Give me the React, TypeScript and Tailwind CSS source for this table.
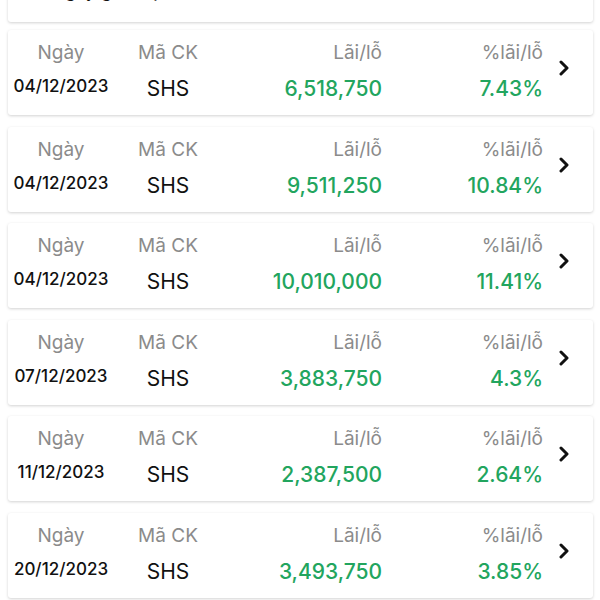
import React from "react";

type Row = { date: string; code: string; pl: string; pct: string };

const rows: Row[] = [
  { date: "04/12/2023", code: "SHS", pl: "6,518,750", pct: "7.43%" },
  { date: "04/12/2023", code: "SHS", pl: "9,511,250", pct: "10.84%" },
  { date: "04/12/2023", code: "SHS", pl: "10,010,000", pct: "11.41%" },
  { date: "07/12/2023", code: "SHS", pl: "3,883,750", pct: "4.3%" },
  { date: "11/12/2023", code: "SHS", pl: "2,387,500", pct: "2.64%" },
  { date: "20/12/2023", code: "SHS", pl: "3,493,750", pct: "3.85%" },
];

function Chevron() {
  return (
    <svg width="12" height="16" viewBox="0 0 12 16" fill="none">
      <polyline points="3,2 9,8 3,14" stroke="#111" strokeWidth="3" strokeLinecap="round" strokeLinejoin="round" />
    </svg>
  );
}

function Card({ r }: { r: Row }) {
  return (
    <div className="flex h-[85px] ml-[8px] mr-[7px] bg-white rounded-[3px] shadow-[0_1px_3px_rgba(0,0,0,0.18)]">
      <div className="w-[106px] flex flex-col items-center pt-[11px]">
        <div className="leading-[24px] text-[19px] text-[#8b8b8b]">Ngày</div>
        <div className="mt-[8px] leading-[26px] text-[17px] text-[#111] font-medium">{r.date}</div>
      </div>
      <div className="w-[108px] flex flex-col items-center pt-[11px]">
        <div className="leading-[24px] text-[19px] text-[#8b8b8b]">Mã CK</div>
        <div className="mt-[11px] leading-[26px] text-[21px] text-[#111]">{r.code}</div>
      </div>
      <div className="w-[160px] flex flex-col items-end pt-[11px]">
        <div className="leading-[24px] text-[19px] text-[#8b8b8b]">Lãi/lỗ</div>
        <div className="mt-[11px] leading-[26px] text-[21px] text-[#22a55e] font-[450]">{r.pl}</div>
      </div>
      <div className="w-[161px] flex flex-col items-end pt-[11px]">
        <div className="leading-[24px] text-[19px] text-[#8b8b8b]">%lãi/lỗ</div>
        <div className="mt-[11px] leading-[26px] text-[21px] text-[#22a55e] font-[450]">{r.pct}</div>
      </div>
      <div className="flex-1 flex justify-center pt-[30px] pr-[8px]">
        <Chevron />
      </div>
    </div>
  );
}

export default function App() {
  return (
    <div className="w-[600px] h-[600px] overflow-hidden bg-white" style={{ fontFamily: "Inter, 'Noto Sans', sans-serif" }}>
      <div className="flex h-[85px] mt-[-63px] ml-[8px] mr-[7px] bg-white rounded-[3px] shadow-[0_1px_3px_rgba(0,0,0,0.18)]">
        <div className="w-[214px] flex flex-col items-center pt-[41px]">
          <div className="leading-[26px] text-[18px] text-[#111]">Ngày giao dịch</div>
        </div>
        <div className="w-[160px] flex flex-col items-end pt-[41px]">
          <div className="leading-[26px] text-[18px] text-[#8b8b8b]">9,762,500</div>
        </div>
        <div className="w-[161px] flex flex-col items-end pt-[41px]">
          <div className="leading-[26px] text-[18px] text-[#bbbbbb]">11.1%</div>
        </div>
      </div>
      <div className="flex flex-col gap-[11.5px] mt-[8px]">
        {rows.map((r, i) => (
          <Card key={i} r={r} />
        ))}
      </div>
    </div>
  );
}
